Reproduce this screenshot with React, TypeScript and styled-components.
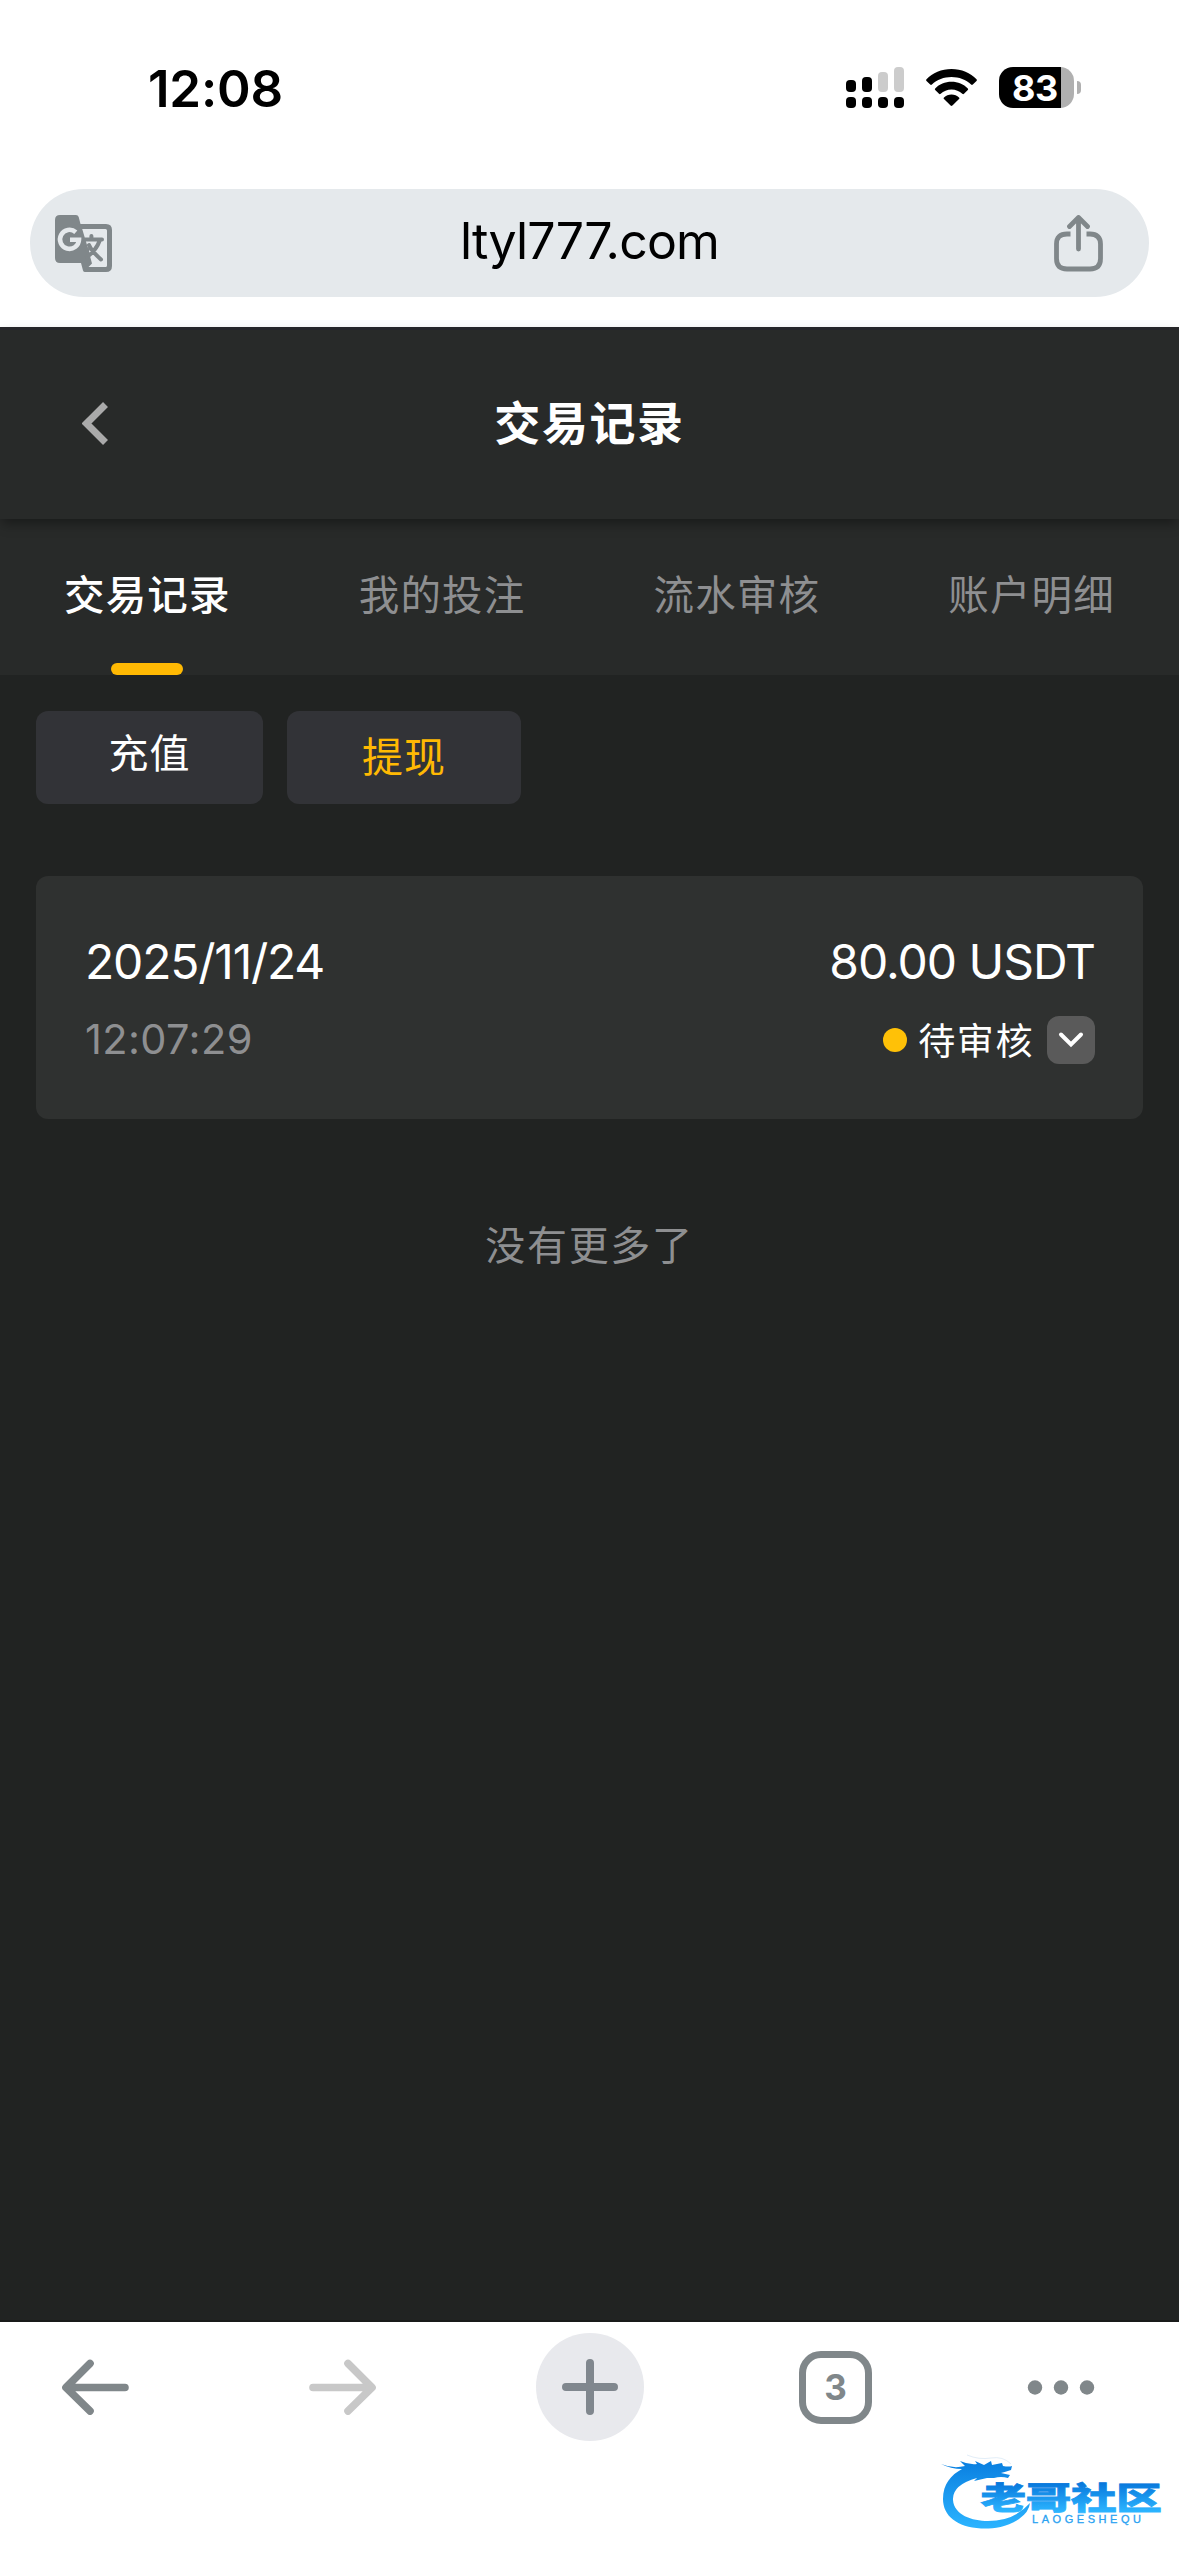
import styled, { createGlobalStyle } from "styled-components";

const GlobalStyle = createGlobalStyle`
    * {
        box-sizing: border-box;
    }
    body {
        margin: 0;
        background: #ffffff;
        font-family: Inter, "Noto Sans CJK SC", sans-serif;
    }
    button {
        border: none;
        padding: 0;
        background: transparent;
        font-family: inherit;
    }
`;

const Screen = styled.div`
    display: flex;
    flex-direction: column;
    width: 1179px;
    height: 2556px;
    overflow: hidden;
    background: #ffffff;
`;

const StatusBar = styled.div`
    display: flex;
    align-items: center;
    height: 175px;
    padding: 0 98px 0 148px;
`;

const Clock = styled.div`
    flex: 1;
    padding-top: 2px;
    font-size: 51px;
    font-weight: 600;
    line-height: 60px;
    letter-spacing: -0.2px;
`;

const StatusIcons = styled.div`
    display: flex;
    align-items: center;
    gap: 22px;
`;

const Battery = styled.div`
    display: flex;
    align-items: center;
    gap: 3px;
`;

const BatteryBody = styled.div<{ level: number }>`
    width: 75px;
    height: 41px;
    border-radius: 14px;
    background: linear-gradient(
        to right,
        #000000 ${(props) => props.level}%,
        #b0b0b0 ${(props) => props.level}%
    );
    color: #ffffff;
    font-size: 36px;
    font-weight: 700;
    line-height: 42px;
    letter-spacing: -0.5px;
    padding-left: 13px;
`;

const BatteryTip = styled.div`
    width: 4px;
    height: 13px;
    border-radius: 0 4px 4px 0;
    background: #b0b0b0;
`;

const AddressArea = styled.div`
    height: 152px;
    padding: 14px 30px 0;
`;

const AddressBar = styled.div`
    display: grid;
    grid-template-columns: 78px 1fr 78px;
    align-items: center;
    height: 108px;
    padding: 0 46px 0 25px;
    border-radius: 54px;
    background: #e5e9ec;
`;

const Address = styled.div`
    font-size: 50px;
    line-height: 60px;
    letter-spacing: -0.8px;
    padding: 0 0 5px 21px;
    text-align: center;
`;

const ShareButton = styled.button`
    display: flex;
    justify-content: flex-end;
`;

const Page = styled.main`
    display: flex;
    flex-direction: column;
    height: 1995px;
    background: #212322;
    border-bottom: 2px solid #191b1a;
`;

const PageHeader = styled.header`
    position: relative;
    z-index: 1;
    display: grid;
    grid-template-columns: 190px 1fr 190px;
    align-items: center;
    height: 192px;
    padding-bottom: 3px;
    background: #282a29;
    border-top: 3px solid #262629;
    box-shadow: 0 6px 12px -2px rgba(0, 0, 0, 0.4);
`;

const BackButton = styled.button`
    display: flex;
    padding-left: 82px;
`;

const PageTitle = styled.h1`
    margin: 0;
    font-size: 46px;
    font-weight: 700;
    line-height: 60px;
    letter-spacing: 1.6px;
    text-align: center;
    color: #ffffff;
`;

const Tabs = styled.nav`
    display: grid;
    grid-template-columns: repeat(4, 1fr);
    height: 156px;
    background: #282a29;
`;

const Tab = styled.button<{ active?: boolean }>`
    display: flex;
    flex-direction: column;
    align-items: center;
    justify-content: space-between;
    padding-top: 47px;
    color: ${(props) => (props.active ? "#ffffff" : "#8e8f91")};
    font-size: 40.5px;
    font-weight: ${(props) => (props.active ? 500 : 400)};
    line-height: 60px;
    letter-spacing: 1.2px;
`;

const TabIndicator = styled.span`
    width: 72px;
    height: 12px;
    border-radius: 6px;
    background: #ffb903;
`;

const Filters = styled.div`
    display: flex;
    gap: 24px;
    padding: 36px 36px 0;
`;

const Filter = styled.button<{ active?: boolean }>`
    width: ${(props) => (props.active ? "234px" : "227px")};
    height: 93px;
    border-radius: 12px;
    background: #323337;
    color: ${(props) => (props.active ? "#ffb903" : "#ffffff")};
    font-size: ${(props) => (props.active ? "41px" : "40px")};
    line-height: 60px;
    letter-spacing: 1px;
    padding-bottom: ${(props) => (props.active ? "2px" : "7px")};
`;

const RecordCard = styled.article`
    display: flex;
    flex-direction: column;
    height: 243px;
    margin: 72px 36px 0;
    padding: 54px 48px 0 49px;
    border-radius: 12px;
    background: #2f3130;
`;

const RecordRow = styled.div`
    display: flex;
    align-items: center;
    justify-content: space-between;
    height: 62px;
    margin-bottom: 17px;
    color: #ffffff;
    font-size: 48px;
`;

const RecordDate = styled.div`
    letter-spacing: -1.2px;
`;

const RecordAmount = styled.div`
    letter-spacing: -1.05px;
`;

const RecordMeta = styled.div`
    display: flex;
    align-items: center;
    justify-content: space-between;
    height: 62px;
`;

const RecordTime = styled.div`
    padding-bottom: 3px;
    color: #8e8f91;
    font-size: 41.5px;
    letter-spacing: 0.4px;
`;

const Status = styled.div`
    display: flex;
    align-items: center;
    color: #ffffff;
    font-size: 37px;
`;

const StatusLabel = styled.span`
    padding-bottom: 3px;
    letter-spacing: 1.6px;
`;

const StatusDot = styled.span`
    width: 24px;
    height: 24px;
    margin-right: 11px;
    border-radius: 50%;
    background: #ffc107;
`;

const ExpandButton = styled.button`
    display: flex;
    align-items: center;
    justify-content: center;
    width: 48px;
    height: 48px;
    margin-left: 13px;
    border-radius: 12px;
    background: #5a5a5a;
`;

const EndOfList = styled.p`
    margin: 97px 0 0;
    color: #8e8f91;
    font-size: 40px;
    line-height: 60px;
    letter-spacing: 1.7px;
    text-align: center;
`;

const BrowserBar = styled.footer`
    display: grid;
    grid-template-columns: 190px 305px 190px 301px 150px;
    align-items: center;
    justify-items: center;
    height: 108px;
    margin-top: 11px;
`;

const NewTabButton = styled.button`
    display: flex;
    align-items: center;
    justify-content: center;
    width: 108px;
    height: 108px;
    border-radius: 50%;
    background: #e8e9ed;
`;

const TabCount = styled.button`
    width: 73px;
    height: 73px;
    border: 7px solid #80878a;
    border-radius: 22px;
    color: #80878a;
    font-size: 35px;
    font-weight: 700;
    line-height: 58px;
`;

const Brand = styled.div`
    display: flex;
    align-self: flex-end;
    width: 240px;
    height: 80px;
    margin: 12px 0 0;
`;

const SignalIcon = () => (
    <svg width="58" height="41" viewBox="0 0 58 41">
        <rect x="0" y="13" width="10" height="12" rx="4" />
        <rect x="16" y="10" width="10" height="15" rx="4" />
        <rect x="32" y="5" width="10" height="20" rx="4" fill="#cccccc" />
        <rect x="48" y="0" width="10" height="25" rx="4" fill="#cccccc" />
        {[0, 16, 32, 48].map((x) => (
            <rect key={x} x={x} y="30" width="10" height="11" rx="4" />
        ))}
    </svg>
);

const WifiIcon = () => (
    <svg width="51" height="37" viewBox="0 0 51 37">
        <path d="M25.500 0C35.500 0 44.500 3.900 50.500 10.200q.8.900 0 1.700l-3.700 3.700q-.8.800-1.700 0C40 10.700 33 8 25.500 8S11 10.700 5.900 15.600q-.9.800-1.700 0L.5 11.900q-.8-.8 0-1.700C6.500 3.900 15.500 0 25.500 0z" />
        <path d="M25.500 12.800c6.400 0 12.200 2.500 16.300 6.600q.8.900 0 1.700l-3.800 3.700q-.8.700-1.700 0c-2.800-2.600-6.600-4.200-10.800-4.200s-8 1.600-10.800 4.200q-.9.700-1.700 0l-3.800-3.700q-.8-.8 0-1.700c4.100-4.100 9.900-6.600 16.300-6.600z" />
        <path d="M25.500 25.500c2.900 0 5.600 1.100 7.500 2.900q.8.800 0 1.700l-6.600 6.400q-.9.800-1.800 0L18 30.100q-.8-.9 0-1.700c1.900-1.800 4.600-2.900 7.500-2.900z" />
    </svg>
);

const TranslateIcon = () => (
    <svg width="57" height="57" viewBox="0 0 57 57" fill="none">
        <path
            d="M5 0H21q2 0 2.700 2L25.500 9H51q6 0 6 6V51q0 6-6 6H30q-1.500 0-2-1.500L26 48H5q-5 0-5-5V5q0-5 5-5z"
            fill="#80878a"
        />
        <path
            d="M27.200 14H50.500q1.500 0 1.500 1.500V50.500q0 1.500-1.500 1.500H33.500L37 48.500 32 30z"
            fill="#e5e9ec"
        />
        <path
            d="M36.400 21v3.500M30 24.500H47M44.500 26C42 33 38 37.500 32 42M34 30C36 35 41 40 46 44.500"
            stroke="#80878a"
            strokeWidth="4"
            strokeLinecap="round"
        />
        <path d="M32 42 29 30l6 4z" fill="#80878a" />
        <path
            d="M20.800 17.200A9.500 9.500 0 1 0 24 24.700H15"
            stroke="#e5e9ec"
            strokeWidth="4.600"
        />
    </svg>
);

const ShareIcon = () => (
    <svg
        width="49"
        height="57"
        viewBox="0 0 49 57"
        fill="none"
        stroke="#80878a"
        strokeWidth="4.800"
    >
        <path d="M16.500 19H13Q2.500 19 2.500 29V43.500Q2.500 54 13 54H36Q46.500 54 46.500 43.500V29Q46.500 19 36 19H32.500" />
        <path
            d="M24.500 34V3M15.500 11.500 24.500 2.500 33.500 11.500"
            strokeLinecap="round"
            strokeLinejoin="round"
        />
    </svg>
);

const BackIcon = () => (
    <svg width="27" height="43" viewBox="0 0 27 43" fill="none">
        <path d="M23.500 2.500 4.500 21.500 23.500 40.500" stroke="#aaaaaa" strokeWidth="7" />
    </svg>
);

const ChevronDown = () => (
    <svg width="26" height="18" viewBox="0 0 26 18" fill="none">
        <path
            d="M3 3.500 13 13.500 23 3.500"
            stroke="#ffffff"
            strokeWidth="4"
            strokeLinecap="round"
        />
    </svg>
);

const ArrowIcon: React.FC<{ color: string; flip?: boolean }> = ({ color, flip }) => (
    <svg width="67" height="56" viewBox="0 0 67 56" fill="none">
        <path
            d={flip ? "M4 28.500H62M39 4.500 63 28.500 39 52" : "M63 28.500H5M28 4.500 4 28.500 28 52"}
            stroke={color}
            strokeWidth="7.600"
            strokeLinecap="round"
            strokeLinejoin="round"
        />
    </svg>
);

const PlusIcon = () => (
    <svg width="56" height="56" viewBox="0 0 56 56">
        <path
            d="M28 4V52M4 28H52"
            stroke="#80878e"
            strokeWidth="8"
            strokeLinecap="round"
        />
    </svg>
);

const MoreIcon = () => (
    <svg width="68" height="16" viewBox="0 0 68 16" fill="#80878a">
        <circle cx="8" cy="8.500" r="7.200" />
        <circle cx="34" cy="8.500" r="7.200" />
        <circle cx="60" cy="8.500" r="7.200" />
    </svg>
);

// Dragon ring with the community name next to it
const BrandLogo = () => (
    <svg width="240" height="80" viewBox="0 0 240 80">
        <defs>
            <linearGradient id="ring" x1="0" y1="0" x2="0" y2="1">
                <stop offset="0" stopColor="#0a7fe0" />
                <stop offset="1" stopColor="#2bb4ff" />
            </linearGradient>
            <linearGradient
                id="name"
                gradientUnits="userSpaceOnUse"
                x1="0"
                y1="-34"
                x2="0"
                y2="3"
            >
                <stop offset="0" stopColor="#0878dc" />
                <stop offset="1" stopColor="#2bb4ff" />
            </linearGradient>
        </defs>
        <path
            d="M2 11Q14 16 26 13L21 8Q30 12 38 11L36 8 45 12 52 8 53 12 63 10 64 13Q70 14 73 13L72 17Q66 19 62 20L71 22 69 25Q62 23 55 25L48 25 35 28 38 25Q13 32 14 47C15 62 33 68 49 68Q75 68 91 50 90 59 80 66C66 75 52 76 42 75.500 18 74 4 63 4 46 4 31 12 22 23 16Q12 16 2 11z"
            fill="url(#ring)"
        />
        <path d="M28 2Q40 7 52 5T72 11" fill="none" stroke="#e3eef8" strokeWidth="1" />
        <text
            transform="translate(41.500 56) scale(1.140 .760)"
            fontFamily='"Noto Sans CJK SC", sans-serif'
            fontSize="40"
            fontWeight="900"
            fill="url(#name)"
            stroke="url(#name)"
            strokeWidth="1"
            textLength="159"
        >
            老哥社区
        </text>
        <text
            x="93"
            y="69.500"
            fontFamily='"Liberation Sans", sans-serif'
            fontSize="11"
            fill="#2aa2f2"
            stroke="#2aa2f2"
            strokeWidth=".3"
            textLength="109"
        >
            LAOGESHEQU
        </text>
    </svg>
);

const TABS = ["交易记录", "我的投注", "流水审核", "账户明细"];

const App: React.FC = () => {
    return (
        <>
            <GlobalStyle />
            <Screen>
                <StatusBar>
                    <Clock>12:08</Clock>
                    <StatusIcons>
                        <SignalIcon />
                        <WifiIcon />
                        <Battery>
                            <BatteryBody level={83}>83</BatteryBody>
                            <BatteryTip />
                        </Battery>
                    </StatusIcons>
                </StatusBar>
                <AddressArea>
                    <AddressBar>
                        <TranslateIcon />
                        <Address>ltyl777.com</Address>
                        <ShareButton>
                            <ShareIcon />
                        </ShareButton>
                    </AddressBar>
                </AddressArea>
                <Page>
                    <PageHeader>
                        <BackButton>
                            <BackIcon />
                        </BackButton>
                        <PageTitle>交易记录</PageTitle>
                    </PageHeader>
                    <Tabs>
                        {TABS.map((label, i) => (
                            <Tab key={label} active={i === 0}>
                                {label}
                                {i === 0 && <TabIndicator />}
                            </Tab>
                        ))}
                    </Tabs>
                    <Filters>
                        <Filter>充值</Filter>
                        <Filter active>提现</Filter>
                    </Filters>
                    <RecordCard>
                        <RecordRow>
                            <RecordDate>2025/11/24</RecordDate>
                            <RecordAmount>80.00 USDT</RecordAmount>
                        </RecordRow>
                        <RecordMeta>
                            <RecordTime>12:07:29</RecordTime>
                            <Status>
                                <StatusDot />
                                <StatusLabel>待审核</StatusLabel>
                                <ExpandButton>
                                    <ChevronDown />
                                </ExpandButton>
                            </Status>
                        </RecordMeta>
                    </RecordCard>
                    <EndOfList>没有更多了</EndOfList>
                </Page>
                <BrowserBar>
                    <ArrowIcon color="#80878a" />
                    <ArrowIcon color="#c8c8c8" flip />
                    <NewTabButton>
                        <PlusIcon />
                    </NewTabButton>
                    <TabCount>3</TabCount>
                    <MoreIcon />
                </BrowserBar>
                <Brand>
                    <BrandLogo />
                </Brand>
            </Screen>
        </>
    );
};

export default App;
